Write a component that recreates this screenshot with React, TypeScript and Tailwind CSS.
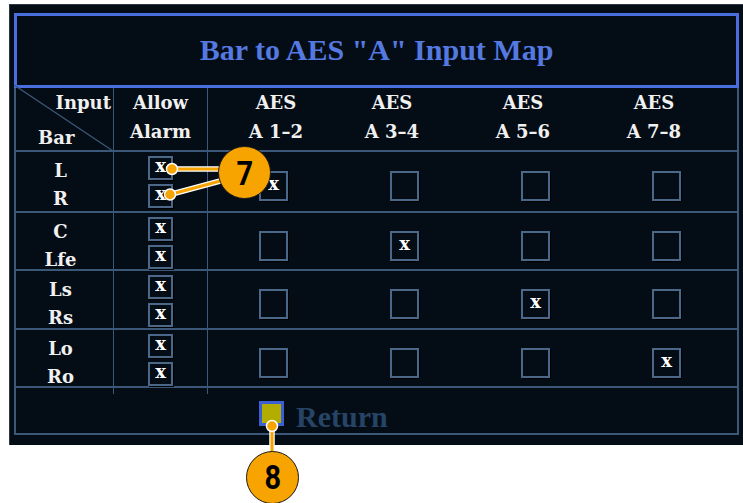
import React from "react";

const serif = "font-['DejaVu_Serif',serif] font-bold";
const line = "border-[#3b5878]";

function Box({ checked }: { checked?: boolean }) {
  return (
    <div className="w-[29px] h-[30px] border-2 border-[#4b6888] shadow-[1px_1px_0_#000] flex items-center justify-center">
      {checked && (
        <span className={`${serif} text-[18px] leading-none text-white -mt-[4px]`}>x</span>
      )}
    </div>
  );
}

function SmallBox() {
  return (
    <div className="w-[25px] h-[24px] border-2 border-[#4b6888] shadow-[1px_1px_0_#000] flex items-center justify-center">
      <span className={`${serif} text-[18px] leading-none text-white -mt-[4px]`}>x</span>
    </div>
  );
}

const groups = [
  { labels: ["L", "R"], h: "h-[61px]", col: 0 },
  { labels: ["C", "Lfe"], h: "h-[58px]", col: 1 },
  { labels: ["Ls", "Rs"], h: "h-[59px]", col: 2 },
  { labels: ["Lo", "Ro"], h: "h-[58px]", col: 3 },
];

const aes = ["A 1\u20132", "A 3\u20134", "A 5\u20136", "A 7\u20138"];

export default function App() {
  return (
    <div className="relative w-[743px] h-[503px] bg-white overflow-hidden">
      <div className="ml-[9px] mt-[4px] w-[734px] h-[441px] bg-[#040c15] border-l border-t border-[#2a3845] pl-[4px] pt-[8px]">
        {/* Title */}
        <div className="w-[725px] h-[75px] border-[3px] border-[#4a6de0] flex items-center justify-center">
          <span className="font-['Liberation_Serif',serif] font-bold text-[30px] leading-none text-[#5479e0] -mt-[2px]">
            Bar to AES "A" Input Map
          </span>
        </div>

        {/* Grid */}
        <div className={`w-[725px] border-l-2 border-r-2 border-b-2 ${line} text-[#f0f0f0]`}>
          {/* Header row */}
          <div className={`relative flex h-[64px] border-b-2 ${line} ${serif} text-[18px] leading-[29px]`}>
            <div className={`relative w-[98px] border-r ${line} flex flex-col`}>
              <svg className="absolute left-[-2px] top-[-3px]" width="100" height="67" viewBox="0 0 100 67">
                <line x1="0" y1="0" x2="99" y2="66" stroke="#3b5878" strokeWidth="1.3" />
              </svg>
              <span className="self-end pr-[2px]">Input</span>
              <span className="pl-[22px] mt-[6px]">Bar</span>
            </div>
            <div className={`w-[94px] border-r ${line} flex flex-col items-center`}>
              <span>Allow</span>
              <span>Alarm</span>
            </div>
            {aes.map((a, i) => (
              <div
                key={a}
                className={`w-[131px] flex flex-col items-center ${i === 0 ? "pl-[5px]" : "pr-[25px]"}`}
              >
                <span>AES</span>
                <span>{a}</span>
              </div>
            ))}
          </div>

          {/* Body rows */}
          {groups.map((g) => (
            <div key={g.labels[0]} className={`flex ${g.h} border-b-2 ${line}`}>
              <div className={`w-[98px] border-r ${line} flex flex-col items-center pt-[5px] pr-[8px] ${serif} text-[18px] leading-[28px]`}>
                <span>{g.labels[0]}</span>
                <span>{g.labels[1]}</span>
              </div>
              <div className={`w-[94px] border-r ${line} flex flex-col items-center pt-[4px] gap-[4px]`}>
                <SmallBox />
                <SmallBox />
              </div>
              {[0, 1, 2, 3].map((c) => (
                <div key={c} className="w-[131px] flex items-center justify-center pt-[9px]">
                  <Box checked={c === g.col} />
                </div>
              ))}
            </div>
          ))}

          {/* Return row */}
          <div className="h-[45px] flex flex-col">
            <div className="flex h-[6px]">
              <div className={`w-[98px] border-r ${line}`} />
              <div className={`w-[94px] border-r ${line}`} />
            </div>
            <div className="flex items-start pl-[243px] mt-[7px] gap-[12px]">
              <div className="w-[25px] h-[25px] border-[3px] border-[#3c5fd4] bg-[#b3ad00]" />
              <span className="font-['Liberation_Serif',serif] font-bold text-[30px] leading-none text-[#264466] mt-[1px]">
                Return
              </span>
            </div>
          </div>
        </div>
      </div>

      {/* Callouts */}
      <svg className="absolute left-0 top-0 pointer-events-none" width="743" height="503" viewBox="0 0 743 503">
        <g stroke="#ffffff" strokeWidth="5.5" strokeLinecap="round">
          <line x1="172" y1="169" x2="222" y2="169" />
          <line x1="170" y1="194.5" x2="224" y2="180" />
          <line x1="272" y1="426" x2="272" y2="454" />
        </g>
        <g stroke="#f7a300" strokeWidth="3" strokeLinecap="round">
          <line x1="172" y1="169" x2="222" y2="169" />
          <line x1="170" y1="194.5" x2="224" y2="180" />
          <line x1="272" y1="426" x2="272" y2="454" />
        </g>
        <g fill="#f7a300" stroke="#ffffff" strokeWidth="1.5">
          <circle cx="172" cy="169" r="5.5" />
          <circle cx="170" cy="194.5" r="5.5" />
          <circle cx="272" cy="426" r="5.5" />
        </g>
      </svg>
      <div className="absolute left-[218px] top-[146px] w-[53px] h-[53px] rounded-full bg-[#f7a300] border border-[#1a1a1a] flex items-center justify-center">
        <span className="font-['Roboto',sans-serif] font-bold text-[34px] leading-none text-black scale-x-[0.85]">7</span>
      </div>
      <div className="absolute left-[246px] top-[451px] w-[53px] h-[53px] rounded-full bg-[#f7a300] border border-[#1a1a1a] flex items-center justify-center">
        <span className="font-['Roboto',sans-serif] font-bold text-[34px] leading-none text-black scale-x-[0.85] -mt-[2px]">8</span>
      </div>
    </div>
  );
}
